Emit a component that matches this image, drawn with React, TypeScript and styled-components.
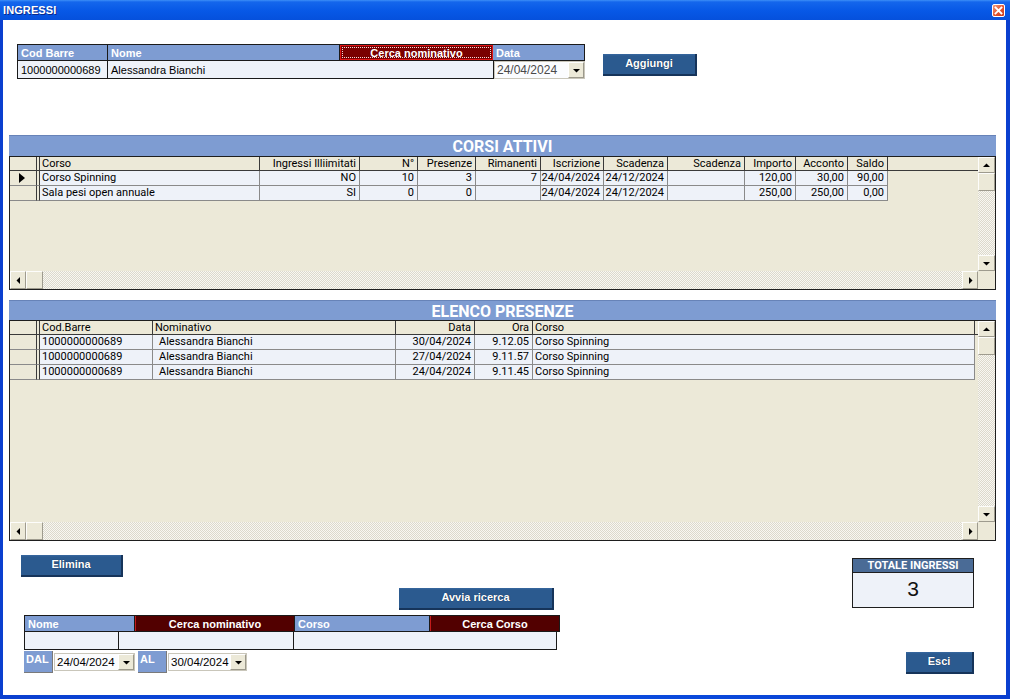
import React from 'react';
import styled, { createGlobalStyle } from 'styled-components';

const GlobalStyle = createGlobalStyle`
  * { box-sizing: border-box; }
  html, body { margin: 0; padding: 0; background: #ffffff; }
  body { font-family: "Liberation Sans", Arial, sans-serif; font-size: 11px; }
`;

const HEAD_BLUE = '#7e9cd2';
const BEIGE = '#ece9d8';
const CELL_BG = '#eef2f9';
const BTN_BLUE = '#2b5a8f';
const HATCH = `repeating-conic-gradient(#f8f7f2 0% 25%, #dcd9cc 0% 50%) 0 0 / 2px 2px`;

type Align = 'left' | 'right';
type Column = { label: string; width: number; align: Align; indent?: number };

const corsiColumns: Column[] = [
   { label: 'Corso', width: 220, align: 'left' },
   { label: 'Ingressi Illiimitati', width: 100, align: 'right' },
   { label: 'N°', width: 58, align: 'right' },
   { label: 'Presenze', width: 58, align: 'right' },
   { label: 'Rimanenti', width: 65, align: 'right' },
   { label: 'Iscrizione', width: 63, align: 'right' },
   { label: 'Scadenza', width: 64, align: 'right' },
   { label: 'Scadenza', width: 77, align: 'right' },
   { label: 'Importo', width: 51, align: 'right' },
   { label: 'Acconto', width: 52, align: 'right' },
   { label: 'Saldo', width: 40, align: 'right' },
];

const corsiRows = [
   ['Corso Spinning', 'NO', '10', '3', '7', '24/04/2024', '24/12/2024', '', '120,00', '30,00', '90,00'],
   ['Sala pesi open annuale', 'SI', '0', '0', '', '24/04/2024', '24/12/2024', '', '250,00', '250,00', '0,00'],
];

const presenzeColumns: Column[] = [
   { label: 'Cod.Barre', width: 113, align: 'left' },
   { label: 'Nominativo', width: 243, align: 'left', indent: 6 },
   { label: 'Data', width: 79, align: 'right' },
   { label: 'Ora', width: 58, align: 'right' },
   { label: 'Corso', width: 442, align: 'left' },
];

const presenzeRows = [
   ['1000000000689', 'Alessandra Bianchi', '30/04/2024', '9.12.05', 'Corso Spinning'],
   ['1000000000689', 'Alessandra Bianchi', '27/04/2024', '9.11.57', 'Corso Spinning'],
   ['1000000000689', 'Alessandra Bianchi', '24/04/2024', '9.11.45', 'Corso Spinning'],
];

/* ---------- small drawings ---------- */

const Arrow = ({ dir }: { dir: 'up' | 'down' | 'left' | 'right' }) => {
   const rot = { up: 0, right: 90, down: 180, left: 270 }[dir];
   return (
      <svg width="7" height="7" viewBox="0 0 7 7">
         <polygon points="0,5 3.5,1.5 7,5" fill="#000" transform={`rotate(${rot} 3.5 3.5)`} />
      </svg>
   );
};

const RowMarker = () => (
   <svg width="6" height="10" viewBox="0 0 6 10">
      <polygon points="0,0 6,5 0,10" fill="#000" />
   </svg>
);

const CloseGlyph = () => (
   <svg width="9" height="9" viewBox="0 0 9 9">
      <path d="M1.5 1.5 L7.5 7.5 M7.5 1.5 L1.5 7.5" stroke="#fff" strokeWidth="1.8" strokeLinecap="square" />
   </svg>
);

/* ---------- window ---------- */

const Window = styled.div`
   width: 1010px;
   height: 699px;
   display: flex;
   flex-direction: column;
   background: linear-gradient(to right, #0a3fcf, #0b4fe2 50%, #0a3fcf);
`;

const TitleBar = styled.div`
   flex: none;
   height: 20px;
   display: flex;
   align-items: center;
   justify-content: space-between;
   padding: 0 5px 0 3px;
   background: linear-gradient(to bottom, #3d8ff7 0, #1466ec 2px, #0758e6 55%, #0550dc 100%);
`;

const Title = styled.span`
   color: #fff;
   font: bold 11px "Liberation Sans", Arial, sans-serif;
   text-shadow: 1px 1px 0 #0b2a8a;
   letter-spacing: 0.1px;
`;

const CloseButton = styled.div`
   width: 13px;
   height: 13px;
   border: 1px solid #fff;
   border-radius: 2px;
   background: linear-gradient(135deg, #f29a7c, #de4f2a 60%, #c93d1c);
   display: flex;
   align-items: center;
   justify-content: center;
`;

const Body = styled.div`
   flex: 1;
   margin: 0 4px 4px 3px;
   background: #ffffff;
   display: flex;
   flex-direction: column;
`;

/* ---------- top search ---------- */

const TopRow = styled.div`
   display: flex;
   align-items: flex-start;
   padding: 24px 0 0 14px;
`;

const SearchTable = styled.div<{ $w: number }>`
   width: ${({ $w }) => $w}px;
   display: flex;
   flex-direction: column;
`;

const SearchHead = styled.div`
   display: flex;
   height: 17px;
   border-top: 1px solid #1a1a1a;
   border-bottom: 1px solid #1a1a1a;
`;

const HeadCell = styled.div<{ $w: number; $kind: 'blue' | 'red' | 'focus' | 'dark' }>`
   width: ${({ $w }) => $w}px;
   flex: none;
   display: flex;
   align-items: center;
   justify-content: ${({ $kind }) => ($kind === 'blue' ? 'flex-start' : 'center')};
   padding-left: ${({ $kind }) => ($kind === 'blue' ? '3px' : '0')};
   color: #fff;
   font: bold 11px "Liberation Sans", Arial, sans-serif;
   background: ${({ $kind }) =>
      $kind === 'blue' ? HEAD_BLUE : $kind === 'dark' ? '#520000' : '#7a0000'};
   border-right: 1px solid #1a1a1a;
   border-left: ${({ $kind }) => ($kind === 'dark' ? '1px solid #c41a1a' : 'none')};
   ${({ $kind }) =>
      $kind === 'focus' &&
      `border: 1px solid #e21414; outline: 1px dotted #f4d9d9; outline-offset: -3px;`}
   &:first-child {
      border-left: 1px solid #1a1a1a;
   }
`;

const SearchBody = styled.div`
   display: flex;
   height: 18px;
`;

const InputCell = styled.div<{ $w: number }>`
   width: ${({ $w }) => $w}px;
   flex: none;
   background: ${CELL_BG};
   border-right: 1px solid #1a1a1a;
   border-bottom: 1px solid #1a1a1a;
   padding-left: 3px;
   display: flex;
   align-items: center;
   color: #000;
   font: 11px "Liberation Sans", Arial, sans-serif;
   &:first-child {
      border-left: 1px solid #1a1a1a;
   }
`;

const Combo = styled.div<{ $w: number; $muted?: boolean }>`
   width: ${({ $w }) => $w}px;
   height: 18px;
   flex: none;
   display: flex;
   align-items: center;
   background: #fbfcfe;
   border: 1px solid #c9c6ba;
   color: ${({ $muted }) => ($muted ? '#4a4a4a' : '#000')};
   font: ${({ $muted }) => ($muted ? '12px' : '11.5px')} "Liberation Sans", Arial, sans-serif;
`;

const ComboText = styled.span`
   flex: 1;
   padding-left: 2px;
   white-space: nowrap;
   overflow: hidden;
`;

const ComboButton = styled.div`
   width: 16px;
   height: 16px;
   flex: none;
   background: ${BEIGE};
   border: 1px solid;
   border-color: #fff #9c998c #9c998c #fff;
   display: flex;
   align-items: center;
   justify-content: center;
`;

const ActionButton = styled.div<{ $w: number }>`
   width: ${({ $w }) => $w}px;
   height: 22px;
   flex: none;
   background: linear-gradient(to bottom, #3868a0 0, ${BTN_BLUE} 2px, ${BTN_BLUE} 100%);
   border-right: 2px solid #16345a;
   border-bottom: 2px solid #16345a;
   color: #fff;
   font: bold 11px "Liberation Sans", Arial, sans-serif;
   text-shadow: 0 0 1px #0d2340;
   display: flex;
   align-items: center;
   justify-content: center;
   padding-bottom: 2px;
`;

/* ---------- data grids ---------- */

const Section = styled.section<{ $top: number }>`
   width: 987px;
   margin: ${({ $top }) => $top}px 0 0 6px;
   display: flex;
   flex-direction: column;
`;

const SectionHead = styled.div<{ $h: number }>`
   height: ${({ $h }) => $h}px;
   background: ${HEAD_BLUE};
   border-top: 1px solid #6783b8;
   color: #fff;
   font: bold 16px Roboto, "Liberation Sans", sans-serif;
   display: flex;
   align-items: center;
   justify-content: center;
   padding-top: 1px;
`;

const GridFrame = styled.div<{ $h: number }>`
   height: ${({ $h }) => $h}px;
   border: 1px solid #1e1e1e;
   background: ${BEIGE};
   display: grid;
   grid-template-columns: 1fr 17px;
   grid-template-rows: 1fr 18px;
   grid-template-areas: 'table v' 'h corner';
`;

const GridArea = styled.div`
   grid-area: table;
   overflow: hidden;
   font: 11px Roboto, "Liberation Sans", sans-serif;
   color: #000;
`;

const GridRow = styled.div<{ $head?: boolean }>`
   display: flex;
   height: ${({ $head }) => ($head ? 14 : 15)}px;
`;

const Selector = styled.div<{ $head?: boolean }>`
   width: 27px;
   flex: none;
   border-right: 1px solid #3a3a3a;
   border-bottom: 1px solid ${({ $head }) => ($head ? '#3a3a3a' : '#8a8a8a')};
   display: flex;
   align-items: center;
   justify-content: center;
   padding-right: 3px;
`;

const Spacer = styled.div<{ $head?: boolean }>`
   width: 3px;
   flex: none;
   border-right: 1px solid #3a3a3a;
   border-bottom: 1px solid ${({ $head }) => ($head ? '#3a3a3a' : '#8a8a8a')};
`;

const Cell = styled.div<{ $w: number; $align: Align; $indent?: number; $head?: boolean }>`
   width: ${({ $w }) => $w}px;
   flex: none;
   background: ${({ $head }) => ($head ? BEIGE : CELL_BG)};
   border-right: 1px solid ${({ $head }) => ($head ? '#3a3a3a' : '#8a8a8a')};
   border-bottom: 1px solid ${({ $head }) => ($head ? '#3a3a3a' : '#8a8a8a')};
   text-align: ${({ $align }) => $align};
   padding: ${({ $align, $indent }) => ($align === 'right' ? '0 3px 0 0' : `0 0 0 ${$indent ?? 2}px`)};
   line-height: 13px;
   white-space: nowrap;
   overflow: hidden;
`;

const HeadFiller = styled.div`
   flex: 1;
   border-bottom: 1px solid #3a3a3a;
`;

const VScroll = styled.div`
   grid-area: v;
   display: flex;
   flex-direction: column;
   background: ${HATCH};
`;

const HScroll = styled.div`
   grid-area: h;
   display: flex;
   background: ${HATCH};
`;

const Corner = styled.div`
   grid-area: corner;
   background: ${BEIGE};
`;

const ScrollPart = styled.div<{ $w: number; $h: number }>`
   width: ${({ $w }) => $w}px;
   height: ${({ $h }) => $h}px;
   flex: none;
   background: ${BEIGE};
   border: 1px solid;
   border-color: #fdfdfb #9e9b8e #9e9b8e #fdfdfb;
   display: flex;
   align-items: center;
   justify-content: center;
`;

const Track = styled.div`
   flex: 1;
`;

interface GridProps {
   columns: Column[];
   rows: string[][];
   height: number;
   marker?: number;
}

const DataGrid = ({ columns, rows, height, marker }: GridProps) => (
   <GridFrame $h={height}>
      <GridArea>
         <GridRow $head>
            <Selector $head />
            <Spacer $head />
            {columns.map((c, i) => (
               <Cell key={i} $head $w={c.width} $align={c.align}>
                  {c.label}
               </Cell>
            ))}
            <HeadFiller />
         </GridRow>
         {rows.map((r, ri) => (
            <GridRow key={ri}>
               <Selector>{marker === ri && <RowMarker />}</Selector>
               <Spacer />
               {r.map((v, ci) => (
                  <Cell
                     key={ci}
                     $w={columns[ci].width}
                     $align={columns[ci].align}
                     $indent={columns[ci].indent}
                  >
                     {v}
                  </Cell>
               ))}
            </GridRow>
         ))}
      </GridArea>
      <VScroll>
         <ScrollPart $w={17} $h={16}>
            <Arrow dir="up" />
         </ScrollPart>
         <ScrollPart $w={17} $h={18} />
         <Track />
         <ScrollPart $w={17} $h={16}>
            <Arrow dir="down" />
         </ScrollPart>
      </VScroll>
      <HScroll>
         <ScrollPart $w={16} $h={18}>
            <Arrow dir="left" />
         </ScrollPart>
         <ScrollPart $w={17} $h={18} />
         <Track />
         <ScrollPart $w={16} $h={18}>
            <Arrow dir="right" />
         </ScrollPart>
      </HScroll>
      <Corner />
   </GridFrame>
);

/* ---------- bottom area ---------- */

const BottomArea = styled.div`
   display: flex;
   justify-content: space-between;
   padding: 0 32px 0 18px;
`;

const LeftColumn = styled.div`
   display: flex;
   flex-direction: column;
   align-items: flex-start;
`;

const RightColumn = styled.div`
   display: flex;
   flex-direction: column;
   align-items: flex-end;
`;

const TotalBox = styled.div`
   width: 122px;
   margin-top: 17px;
   border: 1px solid #1e1e1e;
   display: flex;
   flex-direction: column;
`;

const TotalHead = styled.div`
   height: 14px;
   background: #4a6b96;
   border-bottom: 1px solid #1e1e1e;
   color: #fff;
   font: bold 11px Roboto, "Liberation Sans", sans-serif;
   display: flex;
   align-items: center;
   justify-content: center;
`;

const TotalValue = styled.div`
   height: 34px;
   background: ${CELL_BG};
   color: #111;
   font: 21px "Liberation Sans", Arial, sans-serif;
   text-align: center;
   padding-top: 4px;
`;

const DateRow = styled.div`
   display: flex;
   align-items: flex-start;
   gap: 1px;
   margin: 1px 0 0 3px;
`;

const DateLabel = styled.div<{ $w: number }>`
   width: ${({ $w }) => $w}px;
   height: 22px;
   background: ${HEAD_BLUE};
   border-right: 1px solid #7a7a7a;
   border-bottom: 1px solid #7a7a7a;
   color: #fff;
   font: bold 11px "Liberation Sans", Arial, sans-serif;
   padding: 2px 0 0 2px;
`;

const DateField = styled.div<{ $gap: number }>`
   margin: 2px ${({ $gap }) => $gap}px 0 0;
`;

const TopButtonSlot = styled.div`
   margin: 10px 0 0 18px;
`;

const ButtonSlot = styled.div<{ $top: number; $left: number }>`
   margin: ${({ $top, $left }) => `${$top}px 0 0 ${$left}px`};
`;

const BottomSearch = styled.div`
   width: 536px;
   margin: 5px 0 0 3px;
   display: flex;
   flex-direction: column;
`;

const App = () => {
   return (
      <>
         <GlobalStyle />
         <Window>
            <TitleBar>
               <Title>INGRESSI</Title>
               <CloseButton>
                  <CloseGlyph />
               </CloseButton>
            </TitleBar>
            <Body>
               <TopRow>
                  <SearchTable $w={568}>
                     <SearchHead>
                        <HeadCell $w={91} $kind="blue">Cod Barre</HeadCell>
                        <HeadCell $w={232} $kind="blue">Nome</HeadCell>
                        <HeadCell $w={153} $kind="focus">Cerca nominativo</HeadCell>
                        <HeadCell $w={92} $kind="blue">Data</HeadCell>
                     </SearchHead>
                     <SearchBody>
                        <InputCell $w={91}>1000000000689</InputCell>
                        <InputCell $w={386}>Alessandra Bianchi</InputCell>
                        <Combo $w={91} $muted>
                           <ComboText>24/04/2024</ComboText>
                           <ComboButton>
                              <Arrow dir="down" />
                           </ComboButton>
                        </Combo>
                     </SearchBody>
                  </SearchTable>
                  <TopButtonSlot>
                     <ActionButton $w={94}>Aggiungi</ActionButton>
                  </TopButtonSlot>
               </TopRow>

               <Section $top={56}>
                  <SectionHead $h={21}>CORSI ATTIVI</SectionHead>
                  <DataGrid columns={corsiColumns} rows={corsiRows} height={134} marker={0} />
               </Section>

               <Section $top={10}>
                  <SectionHead $h={20}>ELENCO PRESENZE</SectionHead>
                  <DataGrid columns={presenzeColumns} rows={presenzeRows} height={221} />
               </Section>

               <BottomArea>
                  <LeftColumn>
                     <ButtonSlot $top={14} $left={0}>
                        <ActionButton $w={102}>Elimina</ActionButton>
                     </ButtonSlot>
                     <ButtonSlot $top={11} $left={378}>
                        <ActionButton $w={155}>Avvia ricerca</ActionButton>
                     </ButtonSlot>
                     <BottomSearch>
                        <SearchHead>
                           <HeadCell $w={111} $kind="blue">Nome</HeadCell>
                           <HeadCell $w={160} $kind="dark">Cerca nominativo</HeadCell>
                           <HeadCell $w={135} $kind="blue">Corso</HeadCell>
                           <HeadCell $w={130} $kind="dark">Cerca Corso</HeadCell>
                        </SearchHead>
                        <SearchBody>
                           <InputCell $w={95} />
                           <InputCell $w={175} />
                           <InputCell $w={263} />
                        </SearchBody>
                     </BottomSearch>
                     <DateRow>
                        <DateLabel $w={29}>DAL</DateLabel>
                        <DateField $gap={2}>
                           <Combo $w={81}>
                              <ComboText>24/04/2024</ComboText>
                              <ComboButton>
                                 <Arrow dir="down" />
                              </ComboButton>
                           </Combo>
                        </DateField>
                        <DateLabel $w={29}>AL</DateLabel>
                        <DateField $gap={0}>
                           <Combo $w={79}>
                              <ComboText>30/04/2024</ComboText>
                              <ComboButton>
                                 <Arrow dir="down" />
                              </ComboButton>
                           </Combo>
                        </DateField>
                     </DateRow>
                  </LeftColumn>
                  <RightColumn>
                     <TotalBox>
                        <TotalHead>TOTALE INGRESSI</TotalHead>
                        <TotalValue>3</TotalValue>
                     </TotalBox>
                     <ButtonSlot $top={44} $left={0}>
                        <ActionButton $w={68}>Esci</ActionButton>
                     </ButtonSlot>
                  </RightColumn>
               </BottomArea>
            </Body>
         </Window>
      </>
   );
};

export default App;
